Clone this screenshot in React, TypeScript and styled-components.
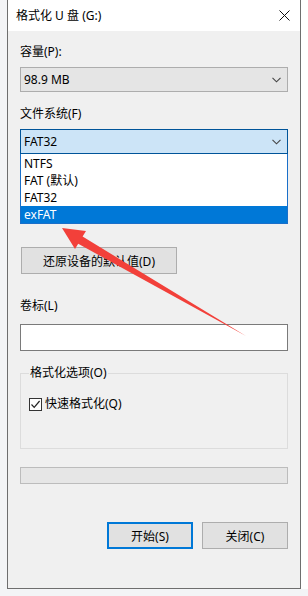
import React from "react";
import styled, { createGlobalStyle } from "styled-components";

const Global = createGlobalStyle`
  html, body {
    margin: 0;
    padding: 0;
  }
  body {
    font-family: "Noto Sans", "Noto Sans CJK SC", sans-serif;
    font-size: 12px;
    color: #000;
  }
`;

const Page = styled.div`
  position: relative;
  width: 308px;
  height: 596px;
  background: #f3f4f6;
  display: flex;
  overflow: hidden;
`;
const Gutter = styled.div`
  width: 7px;
  flex: none;
`;
const RightStrip = styled.div`
  flex: 1;
  height: 589px;
  background: #ffffff;
`;
const Window = styled.div`
  width: 294px;
  height: 589px;
  box-sizing: border-box;
  border: 1px solid #6e6e6e;
  border-top: none;
  background: #f0f0f0;
  display: flex;
  flex-direction: column;
  flex: none;
`;
const TitleBar = styled.div`
  height: 31px;
  background: #ffffff;
  display: flex;
  align-items: center;
  justify-content: space-between;
  padding: 0 10px 0 8px;
  line-height: 16px;
`;
const Body = styled.div`
  padding: 0 12px;
  display: flex;
  flex-direction: column;
`;
const Label = styled.div<{ $top: number }>`
  margin-top: ${(p) => p.$top}px;
  height: 16px;
  line-height: 16px;
`;
const ComboWrap = styled.div`
  position: relative;
  margin-top: 7px;
`;
const Combo = styled.div<{ $focus?: boolean }>`
  margin-top: 7px;
  height: 25px;
  box-sizing: border-box;
  border: 1px solid ${(p) => (p.$focus ? "#005499" : "#adadad")};
  background: ${(p) => (p.$focus ? "#cce4f7" : "#e5e5e5")};
  display: flex;
  align-items: center;
  justify-content: space-between;
  padding: 0 6px 0 3px;
  ${ComboWrap} > & {
    margin-top: 0;
  }
`;
/* the allocation-unit row sits under the open list, so it is not seen */
const Covered = styled.div`
  visibility: hidden;
  display: flex;
  flex-direction: column;
`;
const List = styled.div`
  position: absolute;
  top: 100%;
  left: 0;
  right: 0;
  background: #ffffff;
  border: 1px solid #1a6fc9;
  border-top: none;
  padding-top: 1px;
  z-index: 2;
`;
const Item = styled.div<{ $active?: boolean }>`
  height: 17px;
  line-height: 17px;
  padding-left: 3px;
  background: ${(p) => (p.$active ? "#0078d7" : "transparent")};
  color: ${(p) => (p.$active ? "#ffffff" : "#000000")};
`;
const Button = styled.button<{ $primary?: boolean; $width: number }>`
  width: ${(p) => p.$width}px;
  height: 27px;
  box-sizing: border-box;
  margin: 0;
  padding: 0;
  font: inherit;
  color: #000;
  background: #e1e1e1;
  border: ${(p) => (p.$primary ? "2px solid #0078d7" : "1px solid #adadad")};
`;
const RestoreButton = styled(Button)`
  margin-top: 31px;
  margin-left: 1px;
`;
const TextInput = styled.div`
  margin-top: 10px;
  height: 27px;
  box-sizing: border-box;
  border: 1px solid #7a7a7a;
  background: #ffffff;
`;
const Group = styled.div`
  margin-top: 22px;
  height: 76px;
  box-sizing: border-box;
  border: 1px solid #dcdcdc;
  padding: 0 8px;
  display: flex;
  flex-direction: column;
  align-items: flex-start;
`;
const Legend = styled.span`
  margin-top: -9px;
  height: 16px;
  line-height: 16px;
  padding: 0 1px;
  background: #f0f0f0;
`;
const CheckRow = styled.label`
  margin-top: 15px;
  height: 16px;
  display: flex;
  align-items: center;
  gap: 3px;
  line-height: 16px;
`;
const Box = styled.span`
  width: 13px;
  height: 13px;
  box-sizing: border-box;
  border: 1px solid #333;
  background: #fff;
  display: flex;
  align-items: center;
  justify-content: center;
`;
const Progress = styled.div`
  margin-top: 18px;
  height: 17px;
  box-sizing: border-box;
  border: 1px solid #bcbcbc;
  background: #e6e6e6;
`;
const Actions = styled.div`
  margin-top: 38px;
  display: flex;
  justify-content: flex-end;
  gap: 9px;
`;
const Overlay = styled.svg`
  position: absolute;
  left: 0;
  top: 0;
  pointer-events: none;
  z-index: 5;
`;

const Chevron = () => (
  <svg width="9" height="6" viewBox="0 0 9 6">
    <path d="M0.5 0.8 L4.5 4.8 L8.5 0.8" fill="none" stroke="#444" strokeWidth="1.1" />
  </svg>
);

export default function App() {
  return (
    <Page>
      <Global />
      <Gutter />
      <Window>
        <TitleBar>
          <span>格式化 U 盘 (G:)</span>
          <svg width="11" height="11" viewBox="0 0 11 11">
            <path d="M0.5 0.5 L10.5 10.5 M10.5 0.5 L0.5 10.5" stroke="#111" strokeWidth="1" />
          </svg>
        </TitleBar>
        <Body>
          <Label $top={13}>容量(P):</Label>
          <Combo>
            <span>98.9 MB</span>
            <Chevron />
          </Combo>
          <Label $top={14}>文件系统(F)</Label>
          <ComboWrap>
            <Combo $focus>
              <span>FAT32</span>
              <Chevron />
            </Combo>
            <List>
              <Item>NTFS</Item>
              <Item>FAT (默认)</Item>
              <Item>FAT32</Item>
              <Item $active>exFAT</Item>
            </List>
          </ComboWrap>
          <Covered>
            <Label $top={14}>分配单元大小(A)</Label>
            <Combo>
              <span>4096 字节</span>
              <Chevron />
            </Combo>
          </Covered>
          <RestoreButton $width={156}>还原设备的默认值(D)</RestoreButton>
          <Label $top={24}>卷标(L)</Label>
          <TextInput />
          <Group>
            <Legend>格式化选项(O)</Legend>
            <CheckRow>
              <Box>
                <svg width="11" height="11" viewBox="0 0 11 11">
                  <path d="M1.5 5.5 L4.2 8.3 L9.6 2" fill="none" stroke="#222" strokeWidth="1.2" />
                </svg>
              </Box>
              <span>快速格式化(Q)</span>
            </CheckRow>
          </Group>
          <Progress />
          <Actions>
            <Button $primary $width={86}>开始(S)</Button>
            <Button $width={86}>关闭(C)</Button>
          </Actions>
        </Body>
      </Window>
      <RightStrip />
      <Overlay width="308" height="596" viewBox="0 0 308 596">
        <path
          d="M62 228 L86 231 L82.6 236.6 L246 336 L78.2 243.8 L75 249 Z"
          fill="#f2403a"
        />
      </Overlay>
    </Page>
  );
}
